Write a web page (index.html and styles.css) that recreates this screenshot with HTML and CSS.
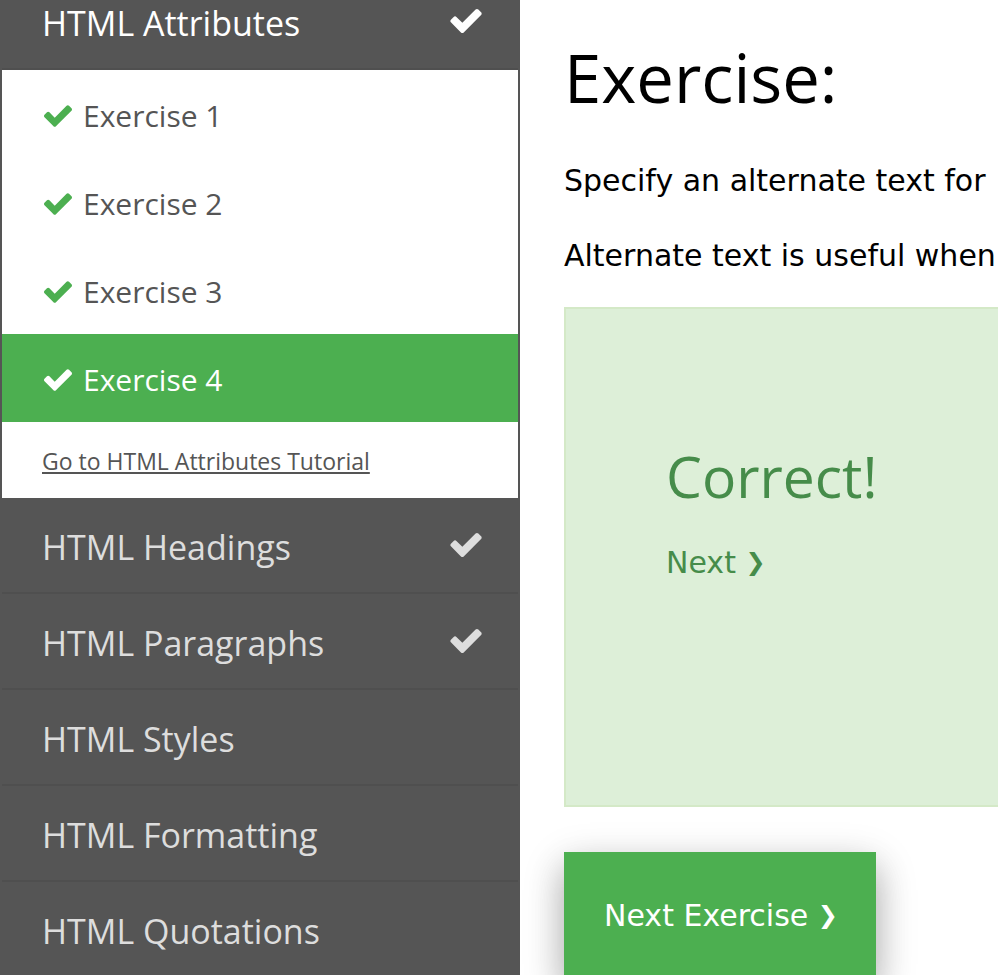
FILE: index.html
```html
<!DOCTYPE html>
<html lang="en">
<head>
<meta charset="utf-8">
<title>HTML Exercises</title>
<link rel="stylesheet" href="styles.css">
</head>
<body>
<svg class="sprite" aria-hidden="true">
  <symbol id="check" viewBox="121 334 1550 1188">
    <path d="M1671 566q0 40-28 68l-724 724-136 136q-28 28-68 28t-68-28l-136-136-362-362q-28-28-28-68t28-68l136-136q28-28 68-28t68 28l294 295 656-657q28-28 68-28t68 28l136 136q28 28 28 68z"/>
  </symbol>
</svg>
<div class="page">
  <nav class="sidebar">
    <a class="topic topic-open" href="#">HTML Attributes<svg class="topic-check"><use href="#check"/></svg></a>
    <div class="exercises">
      <a class="exercise" href="#"><svg class="exercise-check"><use href="#check"/></svg>Exercise 1</a>
      <a class="exercise" href="#"><svg class="exercise-check"><use href="#check"/></svg>Exercise 2</a>
      <a class="exercise" href="#"><svg class="exercise-check"><use href="#check"/></svg>Exercise 3</a>
      <a class="exercise exercise-current" href="#"><svg class="exercise-check"><use href="#check"/></svg>Exercise 4</a>
      <a class="tutorial" href="#">Go to HTML Attributes Tutorial</a>
    </div>
    <a class="topic" href="#">HTML Headings<svg class="topic-check"><use href="#check"/></svg></a>
    <a class="topic" href="#">HTML Paragraphs<svg class="topic-check"><use href="#check"/></svg></a>
    <a class="topic" href="#">HTML Styles</a>
    <a class="topic" href="#">HTML Formatting</a>
    <a class="topic" href="#">HTML Quotations</a>
  </nav>
  <main class="content">
    <h1>Exercise:</h1>
    <p>Specify an alternate text for</p>
    <p>Alternate text is useful when</p>
    <section class="result">
      <h2>Correct!</h2>
      <a href="#">Next <span class="arrow">❯</span></a>
    </section>
    <button class="next" type="button">Next Exercise <span class="arrow">❯</span></button>
  </main>
</div>
</body>
</html>
```
FILE: styles.css
```css
* {
  box-sizing: border-box;
}

body {
  margin: 0;
  overflow: hidden;
  background: #fff;
  color: #000;
  font: 30px/45px "DejaVu Sans", sans-serif;
}

a {
  color: inherit;
  text-decoration: none;
}

.sprite {
  display: none;
}

.page {
  display: flex;
  height: 100vh;
}

/* Sidebar, scrolled part of the way into its first topic */
.sidebar {
  flex: 0 0 520px;
  border: solid #555;
  border-width: 0 2px;
  background: #555;
  color: #ddd;
  font-family: "Open Sans", sans-serif;
  overflow: hidden;
}

.topic {
  display: flex;
  align-items: center;
  justify-content: space-between;
  height: 96px;
  padding: 4px 36px 0 40px;
  border-bottom: 2px solid #4f4f4f;
  font-size: 34px;
}

.topic-open {
  margin-top: -26px;
  color: #fff;
}

.topic-check {
  width: 32px;
  height: 24px;
  margin-bottom: 4px;
  fill: currentColor;
}

.exercises {
  background: #fff;
  color: #555;
}

.exercise {
  display: flex;
  align-items: center;
  gap: 11px;
  height: 88px;
  padding: 2px 42px 0;
  font-size: 30px;
}

.exercise-check {
  width: 28px;
  height: 22px;
  margin-top: 2px;
  fill: #4caf50;
}

.exercise-current {
  background: #4caf50;
  color: #fff;
}

.exercise-current .exercise-check {
  fill: #fff;
}

.tutorial {
  display: block;
  padding: 21px 40px 19px;
  font-size: 23px;
  line-height: 36px;
  text-decoration: underline;
}

.content {
  flex: 1;
  min-width: 0;
  padding: 26px 0 0 44px;
  white-space: nowrap;
  overflow: hidden;
}

h1,
h2 {
  margin: 0;
  font-family: "Open Sans", sans-serif;
  font-weight: 400;
}

h1 {
  font-size: 67px;
  line-height: 102px;
}

p {
  margin: 30px 0 29px;
}

.result {
  height: 500px;
  padding: 122px 100px;
  border: 2px solid #d4e9c7;
  border-right: 0;
  background: #ddefd8;
  color: #468c4a;
}

h2 {
  margin-bottom: 19px;
  font-size: 57px;
  line-height: 90px;
}

.next {
  margin-top: 45px;
  padding: 41px 38px 40px 40px;
  border: 0;
  background: #4caf50;
  color: #fff;
  font: inherit;
  box-shadow: 0 16px 32px rgba(0, 0, 0, 0.2), 0 12px 40px rgba(0, 0, 0, 0.19);
}

.arrow {
  font-size: 24px;
  line-height: 1;
  vertical-align: 3px;
}
```
